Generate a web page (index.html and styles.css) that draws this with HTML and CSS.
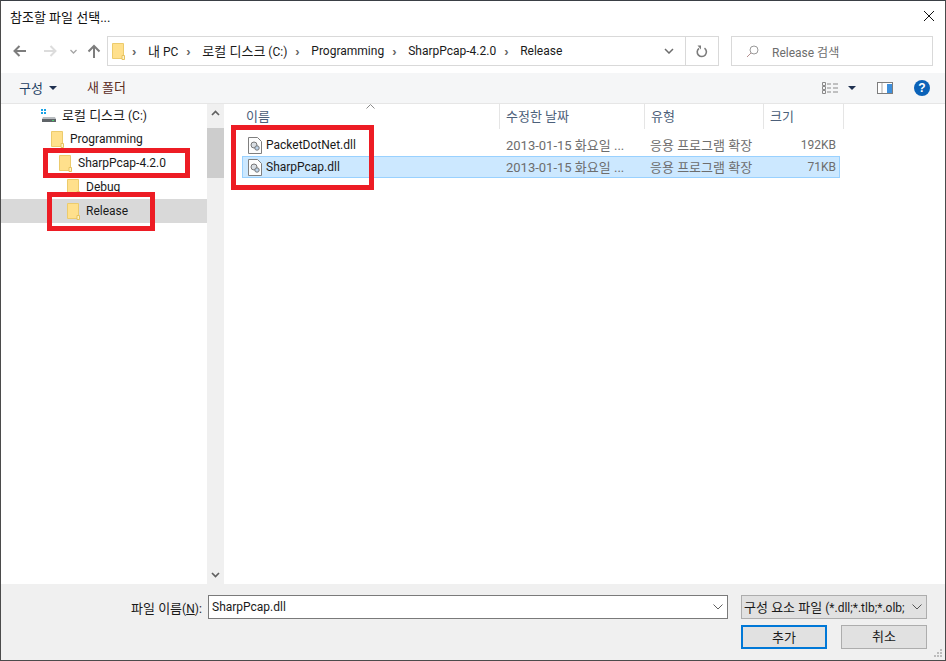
FILE: index.html
```html
<!DOCTYPE html>
<html lang="ko">
<head>
  <meta charset="UTF-8" />
  <title>참조할 파일 선택...</title>
  <link rel="stylesheet" href="styles.css">
</head>
<body>
  <div class="dialog">
    <div class="titlebar">
      <span class="title ko">참조할 파일 선택...</span>
      <svg class="close" width="12" height="12" viewBox="0 0 12 12"><path d="M1 1l10 10M11 1L1 11" stroke="#111" stroke-width="1" fill="none"/></svg>
    </div>

    <div class="navbar">
      <div class="nav-buttons">
        <svg class="nav-back" width="14" height="12" viewBox="0 0 14 12"><path d="M13 6H2M6.500 1L1.500 6l5 5" stroke="#7d7d7d" stroke-width="2" fill="none"/></svg>
        <svg class="nav-forward" width="14" height="12" viewBox="0 0 14 12"><path d="M1 6h11M7.500 1l5 5-5 5" stroke="#dcdcdc" stroke-width="2" fill="none"/></svg>
        <svg class="nav-recent" width="7" height="5" viewBox="0 0 7 5"><path d="M.5 1l3 3 3-3" stroke="#a5a5a5" stroke-width="1.300" fill="none"/></svg>
        <svg class="nav-up" width="14" height="14" viewBox="0 0 14 14"><path d="M7 14V2M1.500 7.500L7 2l5.500 5.500" stroke="#7d7d7d" stroke-width="2" fill="none"/></svg>
      </div>
      <div class="address">
        <svg class="folder" width="13" height="17" viewBox="0 0 13 17"><use href="#folder-shape"/></svg>
        <span class="chev">›</span><span class="crumb"><span class="ko">내</span> PC</span>
        <span class="chev">›</span><span class="crumb"><span class="ko">로컬 디스크</span> (C:)</span>
        <span class="chev">›</span><span class="crumb">Programming</span>
        <span class="chev">›</span><span class="crumb">SharpPcap-4.2.0</span>
        <span class="chev">›</span><span class="crumb">Release</span>
        <span class="address-drop">
          <svg width="10" height="6" viewBox="0 0 10 6"><path d="M1 1l4 4 4-4" stroke="#6d6d6d" stroke-width="1.500" fill="none"/></svg>
        </span>
        <span class="refresh">
          <svg width="12" height="13" viewBox="0 0 12 13"><path d="M8.500 3.200A4.600 4.600 0 1 1 3 3.300" stroke="#7b7b7b" stroke-width="1.600" fill="none"/><path d="M1.500 .5h3.500v4z" fill="#7b7b7b"/></svg>
        </span>
      </div>
      <div class="search">
        <svg width="13" height="13" viewBox="0 0 13 13"><circle cx="8" cy="5" r="4" stroke="#9a9a9a" fill="none"/><path d="M5 8l-4 4" stroke="#b58f8f" fill="none"/></svg>
        <span>Release 검색</span>
      </div>
    </div>

    <div class="toolbar">
      <span class="tool-organize ko">구성</span>
      <span class="arrow-down"></span>
      <span class="tool-newfolder ko">새 폴더</span>
      <div class="tool-right">
        <svg class="view-icon" width="16" height="12" viewBox="0 0 16 12"><path d="M.5.500h3v3h-3zM.5 4.500h3v3h-3zM.5 8.500h3v3h-3z" stroke="#8a8a8a" fill="none"/><path d="M5 2h4M11 2h5M5 6h4M11 6h5M5 10h4M11 10h5" stroke="#8a8a8a"/></svg>
        <span class="arrow-down"></span>
        <svg class="pane-icon" width="16" height="12" viewBox="0 0 16 12"><rect x=".5" y=".5" width="15" height="11" fill="#fff" stroke="#7d7d7d"/><rect x="10" y="2" width="5" height="9" fill="#3d8fdc"/><path d="M5 1v10" stroke="#a9a9a9"/></svg>
        <span class="help">?</span>
      </div>
    </div>

    <div class="main">
      <div class="tree">
        <div class="tree-row drive">
          <svg width="16" height="15" viewBox="0 0 16 15"><path d="M0 1h2v2H0zM3 1h2v2H3zM0 4h2v2H0zM3 4h2v2H3z" fill="#19a3e6"/><path d="M2 9h12l1 2v3H1v-3z" fill="#b8bcc0"/><path d="M1 11h14v3H1z" fill="#5f6468"/><path d="M11 12h2v1h-2z" fill="#45d16a"/></svg>
          <span class="drive-name"><span class="ko">로컬 디스크</span> (C:)</span>
        </div>
        <div class="tree-row level-1">
          <svg class="folder" width="13" height="17" viewBox="0 0 13 17"><use href="#folder-shape"/></svg>
          <span>Programming</span>
        </div>
        <div class="tree-row level-2">
          <svg class="folder" width="13" height="17" viewBox="0 0 13 17"><use href="#folder-shape"/></svg>
          <span>SharpPcap-4.2.0</span>
        </div>
        <div class="tree-row level-3">
          <svg class="folder" width="13" height="17" viewBox="0 0 13 17"><use href="#folder-shape"/></svg>
          <span>Debug</span>
        </div>
        <div class="tree-row level-3 current">
          <svg class="folder" width="13" height="17" viewBox="0 0 13 17"><use href="#folder-shape"/></svg>
          <span>Release</span>
        </div>
      </div>

      <div class="scrollbar">
        <svg width="9" height="6" viewBox="0 0 9 6"><path d="M1 5l3.500-3.500L8 5" stroke="#606060" stroke-width="1.700" fill="none"/></svg>
        <div class="scroll-track"><div class="scroll-thumb"></div></div>
        <svg width="9" height="6" viewBox="0 0 9 6"><path d="M1 1l3.500 3.500L8 1" stroke="#606060" stroke-width="1.700" fill="none"/></svg>
      </div>

      <div class="files">
        <svg class="sort-caret" width="9" height="5" viewBox="0 0 9 5"><path d="M.5 4.500l4-4 4 4" stroke="#8a8a8a" fill="none"/></svg>
        <div class="file-head ko">
          <span class="col-name">이름</span>
          <span class="col-date">수정한 날짜</span>
          <span class="col-type">유형</span>
          <span class="col-size">크기</span>
        </div>
        <div class="file-row">
          <span class="col-name">
            <svg class="dll" width="14" height="17" viewBox="0 0 14 17"><use href="#dll-shape"/></svg>
            PacketDotNet.dll
          </span>
          <span class="col-date ko">2013-01-15 화요일 ...</span>
          <span class="col-type ko">응용 프로그램 확장</span>
          <span class="col-size">192KB</span>
        </div>
        <div class="file-row selected">
          <span class="col-name">
            <svg class="dll" width="14" height="17" viewBox="0 0 14 17"><use href="#dll-shape"/></svg>
            SharpPcap.dll
          </span>
          <span class="col-date ko">2013-01-15 화요일 ...</span>
          <span class="col-type ko">응용 프로그램 확장</span>
          <span class="col-size">71KB</span>
        </div>
      </div>
    </div>

    <div class="footer">
      <div class="footer-row">
        <label class="name-label"><span class="ko">파일 이름</span>(<u>N</u>):</label>
        <div class="name-input">
          <span>SharpPcap.dll</span>
          <svg width="10" height="6" viewBox="0 0 10 6"><path d="M.5.500L5 5l4.500-4.500" stroke="#606060" fill="none"/></svg>
        </div>
        <div class="type-select">
          <span class="type-text"><span class="ko">구성 요소 파일</span> (*.dll;*.tlb;*.olb;</span>
          <svg width="10" height="6" viewBox="0 0 10 6"><path d="M.5.500L5 5l4.500-4.500" stroke="#555" fill="none"/></svg>
        </div>
      </div>
      <div class="footer-buttons ko">
        <button class="btn btn-default">추가</button>
        <button class="btn">취소</button>
      </div>
      <svg class="grip" width="8" height="8" viewBox="0 0 8 8"><path d="M6 0h2v2H6zM3 3h2v2H3zM6 3h2v2H6zM0 6h2v2H0zM3 6h2v2H3zM6 6h2v2H6z" fill="#bdbdbd"/></svg>
    </div>

    <!-- annotation boxes drawn over the screenshot -->
    <div class="mark mark-sharppcap"></div>
    <div class="mark mark-release"></div>
    <div class="mark mark-files"></div>
  </div>

  <svg width="0" height="0" class="defs">
    <symbol id="folder-shape" viewBox="0 0 13 17">
      <path d="M.5.500h11v15H.5z" fill="#ffe08c" stroke="#eccb6c"/>
      <path d="M10 12.500h2.500v4H10z" fill="#fff3c9" stroke="#e6c25f"/>
    </symbol>
    <symbol id="dll-shape" viewBox="0 0 14 17">
      <path d="M.5.500h9l4 4v12H.5z" fill="#fdfdfd" stroke="#7f7f7f"/>
      <circle cx="6" cy="8" r="3" fill="#d8dde2" stroke="#777"/>
      <circle cx="9" cy="11" r="2.200" fill="#bcd3ea" stroke="#777"/>
    </symbol>
  </svg>
</body>
</html>
```

FILE: styles.css
```css
* {
  box-sizing: border-box;
}

body {
  margin: 0;
  font-family: Roboto, "Noto Sans CJK KR", sans-serif;
  font-size: 12px;
  color: #1a1a1a;
  background: #fff;
}

/* hangul runs are set a size up, the latin in the shot is narrow */
.ko {
  font-size: 13px;
}

.defs {
  position: absolute;
}

.dialog {
  position: relative;
  width: 946px;
  height: 661px;
  display: flex;
  flex-direction: column;
  background: #fff;
  border: 1px solid #4b4b4b;
  border-top-color: #3a3f45;
  overflow: hidden;
}

.titlebar {
  height: 35px;
  flex: none;
  display: flex;
  align-items: center;
  justify-content: space-between;
  padding: 0 10px 5px 9px;
}

.title {
  color: #111;
}

/* address bar */
.navbar {
  height: 30px;
  flex: none;
  display: flex;
  align-items: center;
}

.nav-buttons {
  width: 106px;
  flex: none;
  display: flex;
  align-items: center;
  padding-left: 12px;
}

.nav-forward {
  margin-left: 16px;
}

.nav-recent {
  margin-left: 13px;
}

.nav-up {
  margin-left: 10px;
}

.address {
  width: 612px;
  height: 30px;
  flex: none;
  display: flex;
  align-items: center;
  padding-left: 4px;
  border: 1px solid #d9d9d9;
}

.address .folder {
  margin-right: 7px;
}

.chev {
  width: 10px;
  color: #666;
  font-size: 13px;
  font-weight: bold;
  font-family: "Liberation Sans", sans-serif;
}

.crumb {
  margin: 0 8px 0 6px;
  padding-bottom: 1px;
  white-space: nowrap;
}

.address-drop {
  margin-left: auto;
  width: 33px;
  height: 100%;
  display: flex;
  align-items: center;
  justify-content: center;
  border-right: 1px solid #d9d9d9;
}

.refresh {
  width: 32px;
  height: 100%;
  display: flex;
  align-items: center;
  justify-content: center;
}

.search {
  width: 202px;
  height: 30px;
  margin-left: 12px;
  flex: none;
  display: flex;
  align-items: center;
  gap: 13px;
  padding-left: 14px;
  border: 1px solid #d9d9d9;
  color: #6d6d6d;
}

/* command bar */
.toolbar {
  height: 31px;
  margin-top: 7px;
  flex: none;
  display: flex;
  align-items: center;
  background: #f5f6f7;
  border-bottom: 1px solid #e6e6e6;
}

.tool-organize {
  margin-left: 18px;
  padding-bottom: 2px;
  color: #1f3f63;
}

.arrow-down {
  width: 0;
  height: 0;
  margin-left: 6px;
  border: 4px solid transparent;
  border-top: 4px solid #1f3050;
  border-bottom: 0;
}

.tool-newfolder {
  margin-left: 30px;
  padding-bottom: 3px;
  color: #5a2c1e;
}

.tool-right {
  margin-left: auto;
  display: flex;
  align-items: center;
  padding-right: 15px;
}

.tool-right .arrow-down {
  margin-left: 10px;
}

.pane-icon {
  margin-left: 21px;
}

.help {
  width: 16px;
  height: 16px;
  margin-left: 21px;
  border-radius: 50%;
  background: #0a62b8;
  color: #fff;
  font: bold 12px/16px "Liberation Sans", sans-serif;
  text-align: center;
}

/* tree and list */
.main {
  flex: 1;
  display: flex;
  min-height: 0;
}

.tree {
  width: 206px;
  flex: none;
  margin-top: -1px;
}

.tree-row {
  height: 24px;
  display: flex;
  align-items: center;
  white-space: nowrap;
}

.drive {
  padding-left: 40px;
  gap: 5px;
}

.drive-name {
  padding-bottom: 2px;
}

.level-1 {
  padding-left: 50px;
  gap: 6px;
}

.level-2 {
  padding-left: 58px;
  gap: 6px;
}

.level-3 {
  padding-left: 66px;
  gap: 6px;
}

.current {
  background: #d9d9d9;
}

.scrollbar {
  width: 17px;
  flex: none;
  display: flex;
  flex-direction: column;
  align-items: center;
  padding: 6px 0;
  background: #f0f0f0;
}

.scroll-track {
  flex: 1;
  width: 100%;
  padding-top: 12px;
}

.scroll-thumb {
  height: 50px;
  background: #cdcdcd;
}

.files {
  position: relative;
  flex: 1;
  padding-left: 2px;
}

.sort-caret {
  position: absolute;
  left: 142px;
  top: 0;
}

.file-head {
  height: 25px;
  display: flex;
  color: #4c607a;
  margin-bottom: 5px;
}

.file-head span {
  display: flex;
  align-items: center;
  padding: 0 0 2px 6px;
  border-right: 1px solid #e5e5e5;
}

.file-head .col-name {
  width: 274px;
  padding-left: 20px;
}

.col-name {
  width: 258px;
}

.col-date {
  width: 145px;
}

.col-type {
  width: 119px;
}

.col-size {
  width: 80px;
}

.file-row {
  width: 598px;
  height: 22px;
  margin-left: 16px;
  display: flex;
  align-items: center;
  border: 1px solid transparent;
  color: #6d6d6d;
  white-space: nowrap;
}

.file-row .col-name {
  display: flex;
  align-items: center;
  gap: 4px;
  padding-left: 5px;
  color: #1a1a1a;
}

.file-row .col-date,
.file-row .col-type {
  padding: 0 0 2px 5px;
}

.file-row .col-type {
  padding-left: 4px;
}

.file-row .col-size {
  width: 71px;
  text-align: right;
}

.file-row.selected {
  background: #cce8ff;
  border-color: #99d1ff;
}

/* bottom */
.footer {
  position: relative;
  height: 76px;
  flex: none;
  background: #f0f0f0;
  padding: 11px 18px 0 130px;
}

.footer-row {
  display: flex;
  align-items: center;
}

.name-label {
  width: 77px;
  flex: none;
  white-space: nowrap;
}

.name-input {
  width: 520px;
  height: 24px;
  flex: none;
  display: flex;
  align-items: center;
  justify-content: space-between;
  padding: 0 4px 0 3px;
  background: #fff;
  border: 1px solid #7a7a7a;
}

.type-select {
  width: 186px;
  height: 24px;
  margin-left: 13px;
  flex: none;
  display: flex;
  align-items: center;
  justify-content: space-between;
  padding: 0 4px 0 2px;
  background: #e1e1e1;
  border: 1px solid #adadad;
  white-space: nowrap;
  overflow: hidden;
}

.type-text {
  padding-bottom: 2px;
}

.footer-buttons {
  display: flex;
  justify-content: flex-end;
  gap: 14px;
  margin-top: 6px;
}

.btn {
  width: 86px;
  height: 24px;
  padding: 0 0 3px;
  background: #e1e1e1;
  border: 1px solid #adadad;
  font: inherit;
  color: #1a1a1a;
}

.btn-default {
  border: 2px solid #0078d7;
}

.grip {
  position: absolute;
  right: 3px;
  bottom: 3px;
}

.mark {
  position: absolute;
  border: 5px solid #ed1c24;
}

.mark-sharppcap {
  left: 42px;
  top: 147px;
  width: 147px;
  height: 30px;
}

.mark-release {
  left: 46px;
  top: 191px;
  width: 108px;
  height: 39px;
}

.mark-files {
  left: 230px;
  top: 124px;
  width: 143px;
  height: 65px;
}
```
